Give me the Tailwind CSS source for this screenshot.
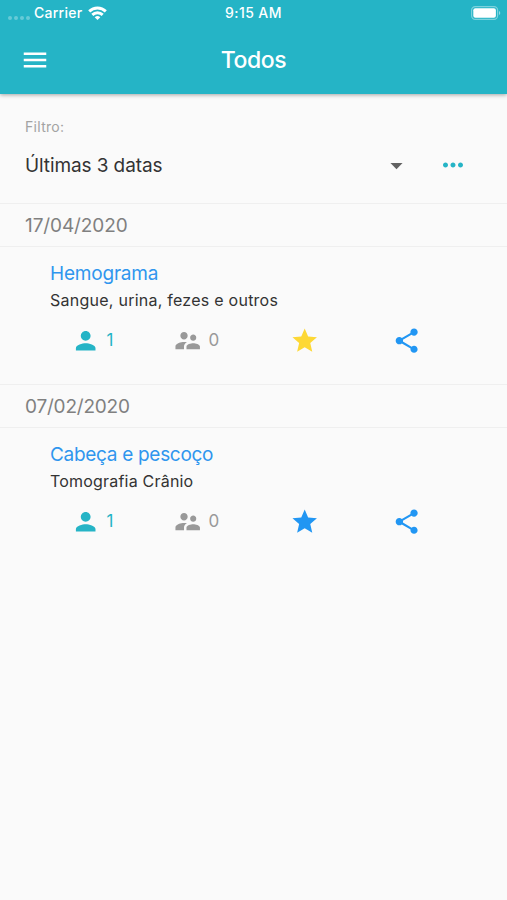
<!DOCTYPE html>
<html lang="pt-BR">
<head>
    <meta charset="UTF-8">
    <meta name="viewport" content="width=device-width, initial-scale=1.0">
    <title>Todos</title>
    <script src="https://cdn.jsdelivr.net/npm/@tailwindcss/browser@4"></script>
</head>
<body class="min-h-screen bg-[#fafafa] font-['Inter',sans-serif]">
    <!-- Icons -->
    <svg class="hidden">
        <symbol id="person" viewBox="0 0 24 24"><path d="M12 12c2.21 0 4-1.79 4-4s-1.79-4-4-4-4 1.79-4 4 1.79 4 4 4zm0 2c-2.67 0-8 1.34-8 4v2h16v-2c0-2.66-5.33-4-8-4z"/></symbol>
        <symbol id="people" viewBox="0 0 24 24"><path d="M16.5 12c1.38 0 2.49-1.12 2.49-2.5S17.88 7 16.5 7C15.12 7 14 8.12 14 9.5s1.12 2.5 2.5 2.5zM9 11c1.66 0 2.99-1.34 2.99-3S10.66 5 9 5C7.34 5 6 6.34 6 8s1.34 3 3 3zm7.5 3c-1.83 0-5.5.92-5.5 2.75V19h11v-2.25c0-1.83-3.67-2.75-5.5-2.75zM9 13c-2.33 0-7 1.17-7 3.5V19h7v-2.25c0-.85.33-2.34 2.37-3.47C10.5 13.1 9.66 13 9 13z"/></symbol>
        <symbol id="star" viewBox="0 0 24 24"><path d="M12 17.27L18.18 21l-1.64-7.03L22 9.24l-7.19-.61L12 2 9.19 8.63 2 9.24l5.46 4.73L5.82 21z"/></symbol>
        <symbol id="share" viewBox="0 0 24 24"><path d="M18 16.08c-.76 0-1.44.3-1.96.77L8.91 12.7c.05-.23.09-.46.09-.7s-.04-.47-.09-.7l7.05-4.11c.54.5 1.25.81 2.04.81 1.66 0 3-1.34 3-3s-1.34-3-3-3-3 1.34-3 3c0 .24.04.47.09.7L8.04 9.81C7.5 9.31 6.79 9 6 9c-1.66 0-3 1.34-3 3s1.34 3 3 3c.79 0 1.5-.31 2.04-.81l7.12 4.16c-.05.21-.08.43-.08.65 0 1.61 1.31 2.92 2.92 2.92 1.61 0 2.92-1.31 2.92-2.92s-1.31-2.92-2.92-2.92z"/></symbol>
    </svg>

    <!-- Header -->
    <header class="h-[94px] bg-[#25b4c6] text-white shadow-[0_1px_4px_rgba(0,0,0,0.35)]">
        <div class="grid h-[26px] grid-cols-3 items-center pl-2 pr-[6px] text-[14px] font-medium leading-none">
            <div class="flex items-center">
                <div class="mt-[9px] flex gap-[2px]">
                    <span class="size-[4px] rounded-full bg-white/30"></span>
                    <span class="size-[4px] rounded-full bg-white/30"></span>
                    <span class="size-[4px] rounded-full bg-white/30"></span>
                    <span class="size-[4px] rounded-full bg-white/30"></span>
                </div>
                <span class="ml-1 tracking-[0.25px]">Carrier</span>
                <svg class="ml-[6px] h-[14px] w-[19px]" viewBox="0 0 19 14" fill="none" stroke="currentColor" stroke-width="2.9">
                    <path d="M1.2 5.4a11.9 11.9 0 0 1 16.6 0"/>
                    <path d="M4.3 8.9a7.5 7.5 0 0 1 10.4 0"/>
                    <path d="M9.5 14L6.7 11.3a4 4 0 0 1 5.6 0z" fill="currentColor" stroke="none"/>
                </svg>
            </div>
            <div class="pr-[2px] text-center tracking-[0.4px]">9:15 AM</div>
            <svg class="h-[14px] w-[30px] justify-self-end" viewBox="0 0 30 14">
                <rect x=".6" y=".6" width="26" height="12.8" rx="3.6" fill="none" stroke="#fff" stroke-opacity=".4" stroke-width="1.2"/>
                <rect x="2.3" y="2.3" width="22.6" height="9.4" rx="2" fill="#fff"/>
                <path d="M28 5v4a2.2 2.2 0 0 0 0-4z" fill="#fff" fill-opacity=".5"/>
            </svg>
        </div>
        <div class="grid h-[68px] grid-cols-3 items-center px-5">
            <button aria-label="Menu">
                <svg class="size-[30px]" viewBox="0 0 24 24" fill="currentColor"><path d="M3 18h18v-2H3v2zm0-5h18v-2H3v2zm0-7v2h18V6H3z"/></svg>
            </button>
            <h1 class="text-center text-[23px] font-medium leading-none tracking-[-0.4px]">Todos</h1>
        </div>
    </header>

    <main>
        <!-- Filter -->
        <section class="h-[110px] border-b border-[#efefef] px-[25px] pt-[25px]">
            <p class="text-[14px] leading-4 tracking-[0.3px] text-[#a3a3a3]">Filtro:</p>
            <div class="mt-[15px] flex h-[30px] items-center">
                <span class="flex-1 pt-[2px] text-[19px] tracking-[-0.1px] text-[#333]">Últimas 3 datas</span>
                <svg class="size-[29px] fill-[#616161]" viewBox="0 0 24 24"><path d="M7 10l5 5 5-5z"/></svg>
                <svg class="ml-[27px] mr-[14px] size-[30px] fill-[#25b4c6]" viewBox="0 0 24 24"><path d="M6 10c-1.1 0-2 .9-2 2s.9 2 2 2 2-.9 2-2-.9-2-2-2zm12 0c-1.1 0-2 .9-2 2s.9 2 2 2 2-.9 2-2-.9-2-2-2zm-6 0c-1.1 0-2 .9-2 2s.9 2 2 2 2-.9 2-2-.9-2-2-2z"/></svg>
            </div>
        </section>

        <!-- 17/04/2020 -->
        <section class="h-[181px] border-b border-[#efefef]">
            <h2 class="flex h-[43px] items-center border-b border-[#efefef] px-[25px] pt-[2px] text-[19px] tracking-[-0.1px] text-[#808080]">17/04/2020</h2>
            <div class="px-[50px] pt-[13px]">
                <h3 class="text-[19px] leading-7 tracking-[-0.2px] text-[#2f96ee]">Hemograma</h3>
                <p class="text-[16px] leading-6 tracking-[0.25px] text-[#333]">Sangue, urina, fezes e outros</p>
            </div>
            <div class="grid grid-cols-[102px_117px_102px_30px] items-center pl-[71px] pt-[13.5px] text-[17px]">
                <span class="flex items-center gap-[6px] text-[#25b4c6]"><svg class="size-[29.4px]" fill="currentColor"><use href="#person"/></svg><span class="pt-px">1</span></span>
                <span class="flex items-center gap-[6px] text-[#999]"><svg class="size-[29.4px]" fill="currentColor"><use href="#people"/></svg><span class="pt-px">0</span></span>
                <svg class="size-[29.4px] fill-[#fdd835]"><use href="#star"/></svg>
                <svg class="size-[29.4px] fill-[#2196f3]"><use href="#share"/></svg>
            </div>
        </section>

        <!-- 07/02/2020 -->
        <section>
            <h2 class="flex h-[43px] items-center border-b border-[#efefef] px-[25px] pt-[2px] text-[19px] tracking-[-0.2px] text-[#808080]">07/02/2020</h2>
            <div class="px-[50px] pt-[13px]">
                <h3 class="text-[19px] leading-7 tracking-[-0.3px] text-[#2f96ee]">Cabeça e pescoço</h3>
                <p class="text-[16px] leading-6 tracking-[0.2px] text-[#333]">Tomografia Crânio</p>
            </div>
            <div class="grid grid-cols-[102px_117px_102px_30px] items-center pl-[71px] pt-[13.5px] text-[17px]">
                <span class="flex items-center gap-[6px] text-[#25b4c6]"><svg class="size-[29.4px]" fill="currentColor"><use href="#person"/></svg><span class="pt-px">1</span></span>
                <span class="flex items-center gap-[6px] text-[#999]"><svg class="size-[29.4px]" fill="currentColor"><use href="#people"/></svg><span class="pt-px">0</span></span>
                <svg class="size-[29.4px] fill-[#2196f3]"><use href="#star"/></svg>
                <svg class="size-[29.4px] fill-[#2196f3]"><use href="#share"/></svg>
            </div>
        </section>
    </main>
</body>
</html>
